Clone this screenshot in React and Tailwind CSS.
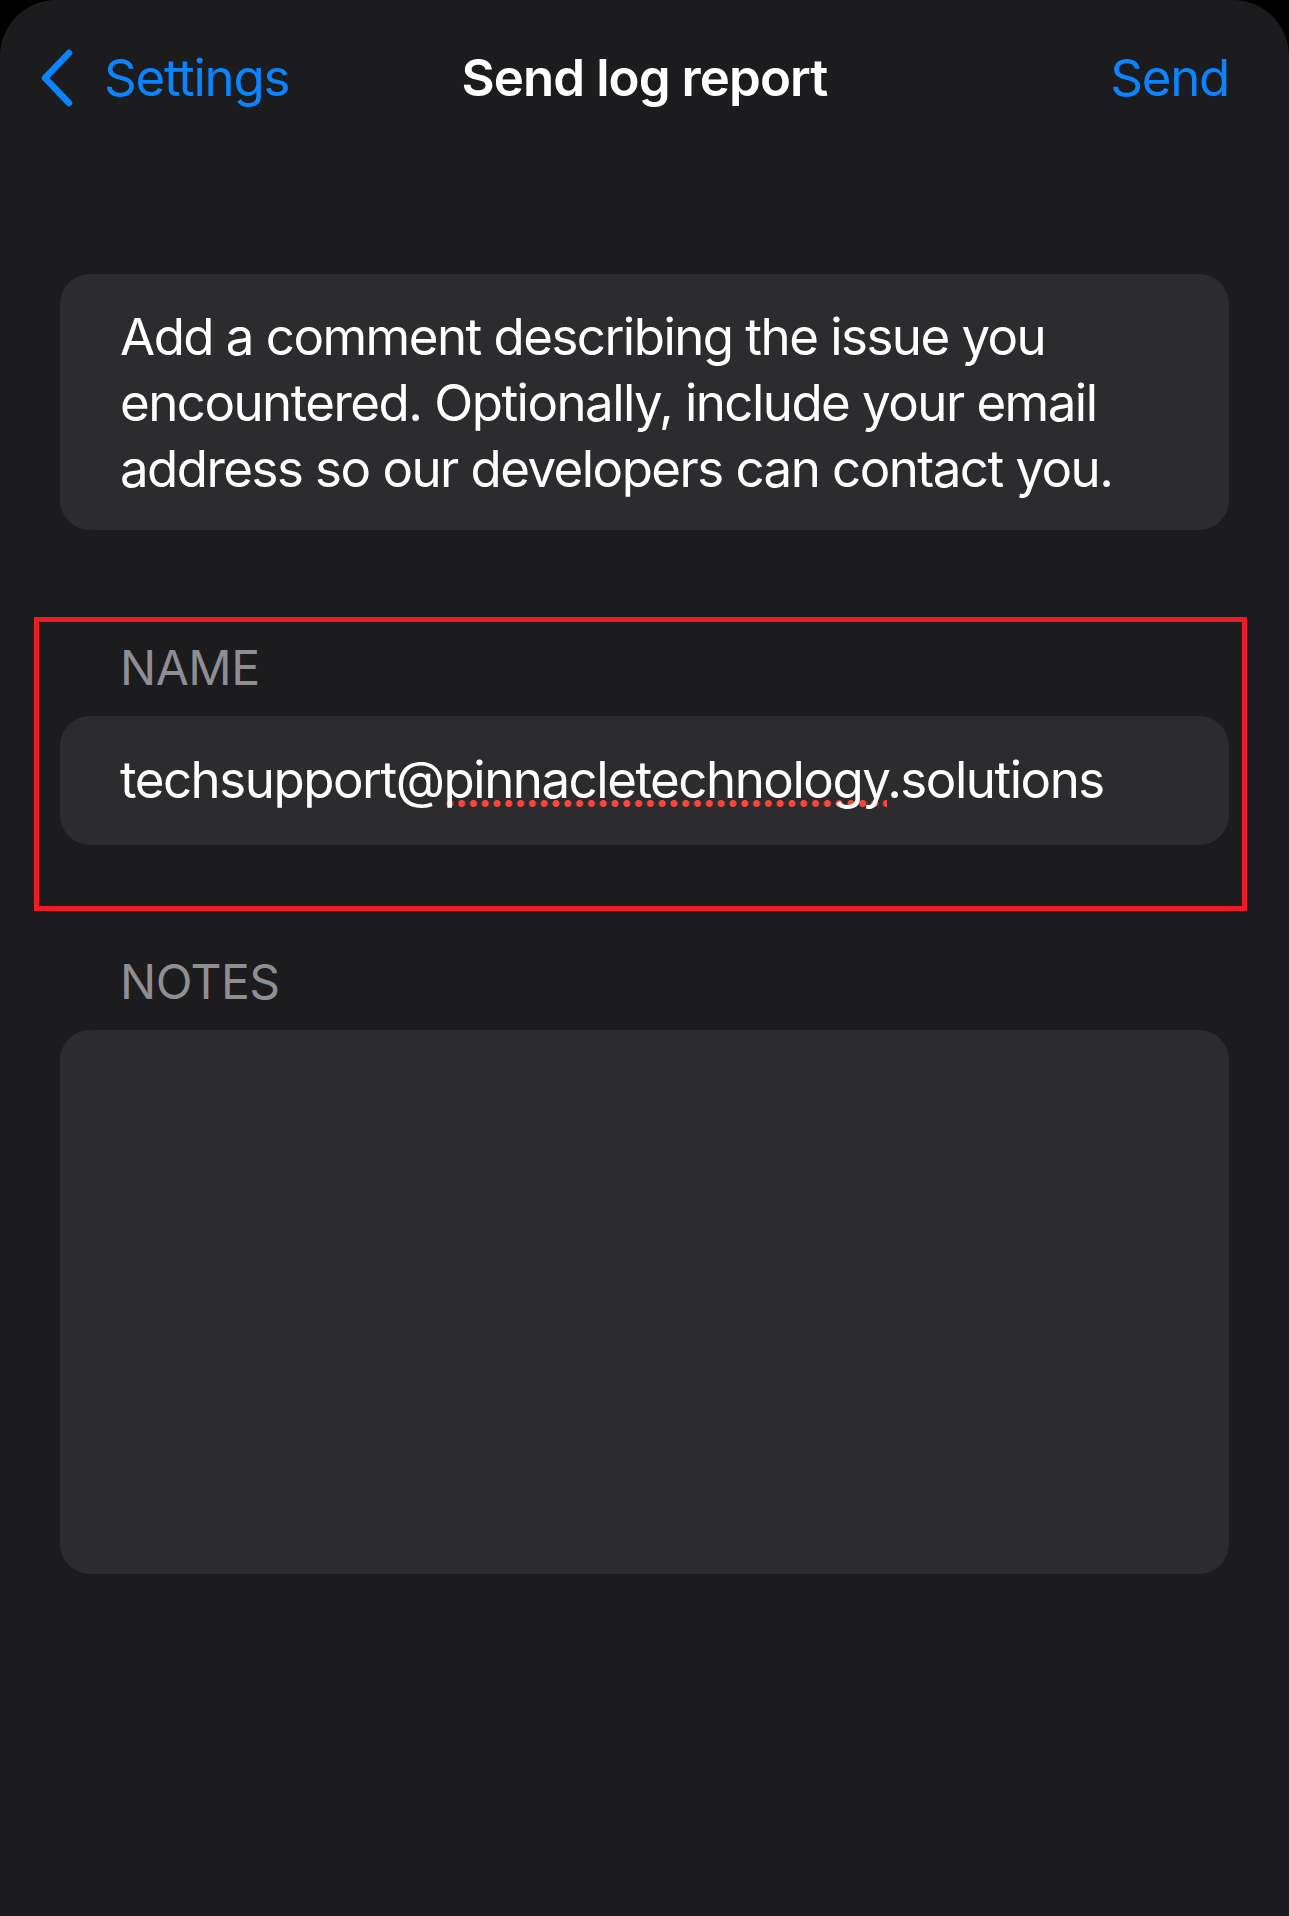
import React from 'react';

const ChevronLeft = () => (
  <svg width="34" height="58" viewBox="0 0 34 58" fill="none" className="shrink-0">
    <polyline
      points="29,4 5,29 29,54"
      stroke="#0a84ff"
      strokeWidth="6.5"
      strokeLinecap="round"
      strokeLinejoin="round"
    />
  </svg>
);

const SectionLabel = ({ children }) => (
  <div className="pl-[60px] text-[48px] leading-[58px] text-[#8e8e93] tracking-[-0.01em]">{children}</div>
);

const App = () => {
  return (
    <div className="min-h-screen bg-black font-['Inter','Liberation_Sans',sans-serif]">
      <div className="min-h-[1916px] bg-[#1c1c1e] rounded-t-[56px] text-white">
        {/* Nav bar */}
        <div className="grid grid-cols-[1fr_auto_1fr] items-center h-[156px] px-[40px]">
          <div className="flex items-center gap-[30px] text-[#0a84ff]">
            <ChevronLeft />
            <span className="text-[51px] tracking-[-0.025em]">Settings</span>
          </div>
          <h1 className="text-[51px] font-semibold tracking-[-0.018em]">Send log report</h1>
          <div className="justify-self-end pr-[20px] text-[51px] text-[#0a84ff] tracking-[-0.025em]">Send</div>
        </div>

        <div className="px-[60px] pt-[118px]">
          {/* Info card */}
          <div className="bg-[#2c2c2e] rounded-[30px] pl-[60px] pr-[40px] pt-[30px] pb-[28px] text-[51px] leading-[66px] tracking-[-0.03em]">
            Add a comment describing the issue you encountered. Optionally, include your email address so our developers can contact you.
          </div>

          {/* Name section (highlighted) */}
          <div className="-ml-[26px] -mr-[18px] mt-[87px] border-[5px] border-[#ed1c24] pl-[21px] pr-[13px] pt-[17px] pb-[61px]">
            <SectionLabel>NAME</SectionLabel>
            <div className="mt-[19px] bg-[#2c2c2e] rounded-[30px] h-[129px] flex items-center pl-[60px] text-[51px] tracking-[-0.029em] whitespace-nowrap">
              <span>
                techsupport@
                <span className="bg-[radial-gradient(circle,#ff453a_3.2px,transparent_3.8px)] bg-[length:11.8px_9px] bg-repeat-x bg-[position:0_calc(100%-2px)]">
                  pinnacletechnology
                </span>
                .solutions
              </span>
            </div>
          </div>

          {/* Notes section */}
          <div className="mt-[42px]">
            <SectionLabel>NOTES</SectionLabel>
            <div className="mt-[19px] bg-[#2c2c2e] rounded-[30px] h-[544px]" />
          </div>
        </div>
      </div>
    </div>
  );
};

export default App;
